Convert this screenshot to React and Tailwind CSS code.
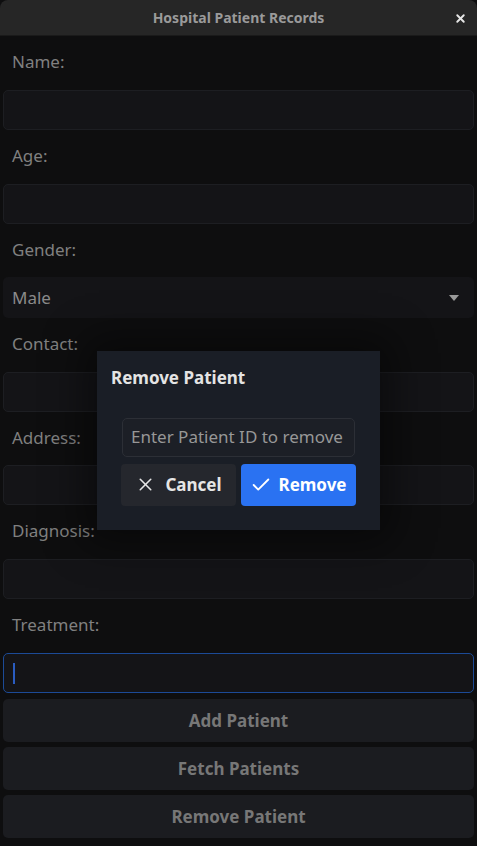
import React from 'react';
import { X, Check } from 'lucide-react';

const fields = [
  { label: 'Name:', h: 'h-[54px]' },
  { label: 'Age:', h: 'h-[54px]' },
  { label: 'Gender:', h: 'h-[53px]' },
  { label: 'Contact:', h: 'h-[54px]' },
  { label: 'Address:', h: 'h-[53px]' },
  { label: 'Diagnosis:', h: 'h-[54px]' },
  { label: 'Treatment:', h: 'h-[54px]' },
];

function TextBox({ focused }) {
  return (
    <div
      className={
        'mx-[3px] h-10 rounded-[5px] border bg-[#141417] flex items-center px-[9px] ' +
        (focused ? 'border-[#1c4a96]' : 'border-[#1d1e22]')
      }
    >
      {focused && <div className="w-[2px] h-[21px] bg-[#2a5cc0]" />}
    </div>
  );
}

export default function App() {
  return (
    <div className="relative w-[477px] h-[846px] bg-[#0e0e0f] overflow-hidden" style={{ fontFamily: "'Noto Sans', 'Open Sans', sans-serif" }}>
      {/* title bar */}
      <div className="h-[36px] bg-[#262626] rounded-t-[8px] border-b border-[#1a1a1a] flex items-center justify-center relative">
        <span className="text-[14px] font-bold text-[#9a9a9a]">Hospital Patient Records</span>
        <X size={13} strokeWidth={3.5} className="absolute right-[10px] top-[12px] text-[#e6e6e6]" />
      </div>

      <div className="flex flex-col">
        {fields.map((f) => (
          <div key={f.label} className="flex flex-col">
            <div className={f.h + ' flex items-center px-3 pb-[2px] text-[17px] text-[#808080]'}>{f.label}</div>
            {f.label === 'Gender:' ? (
              <div className="mx-[3px] h-[41px] rounded-[5px] bg-[#141417] flex items-center justify-between pl-[9px] pr-[15px]">
                <span className="text-[17px] text-[#8a8a8a]">Male</span>
                <svg width="10" height="6" viewBox="0 0 10 6"><path d="M0 0h10L5 6z" fill="#9a9a9a" /></svg>
              </div>
            ) : (
              <TextBox focused={f.label === 'Treatment:'} />
            )}
          </div>
        ))}
        <div className="flex flex-col gap-[5px] px-[3px] pt-[6px]">
          {['Add Patient', 'Fetch Patients', 'Remove Patient'].map((b) => (
            <div key={b} className="h-[43px] rounded-[5px] bg-[#1b1c20] flex items-center justify-center text-[17px] font-bold text-[#777777]">
              {b}
            </div>
          ))}
        </div>
      </div>

      {/* modal */}
      <div className="absolute left-[97px] top-[351px] w-[283px] h-[179px] bg-[#1a1e26] shadow-[0_0_40px_12px_rgba(0,0,0,0.45)] flex flex-col">
        <div className="pl-[14px] pt-[14px] text-[17px] font-bold text-[#e4e4e4]">Remove Patient</div>
        <div className="flex flex-col items-center pt-[27px] gap-[7px]">
          <div className="w-[233px] h-[39px] rounded-[5px] border border-[#2c2f36] bg-[#1c1f26] flex items-center px-[8px] text-[17px] text-[#979797] whitespace-nowrap">
            Enter Patient ID to remove
          </div>
          <div className="flex gap-[5px]">
            <div className="w-[115px] h-[42px] rounded-[4px] bg-[#25272d] flex items-center justify-center gap-[9px] text-[17px] font-bold text-[#e6e6e6]">
              <X size={21} strokeWidth={1.8} />
              Cancel
            </div>
            <div className="w-[115px] h-[42px] rounded-[4px] bg-[#2a72f2] flex items-center justify-center gap-[6px] text-[17px] font-bold text-white">
              <Check size={22} strokeWidth={2} />
              Remove
            </div>
          </div>
        </div>
      </div>
    </div>
  );
}
